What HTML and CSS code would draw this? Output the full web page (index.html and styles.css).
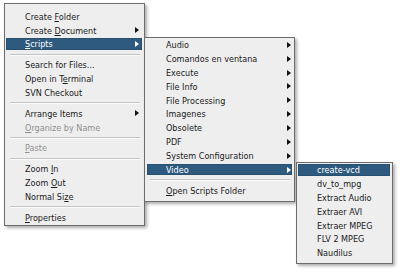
FILE: index.html
```html
<!DOCTYPE html>
<html>
<head>
<meta charset="utf-8">
<link rel="stylesheet" href="styles.css">
</head>
<body>
<div class="stage">
  <div class="menu m1">
    <div class="item"><span class="label">Create <u>F</u>older</span></div>
    <div class="item"><span class="label">Create <u>D</u>ocument</span><span class="arrow"></span></div>
    <div class="item active"><span class="label"><u>S</u>cripts</span><span class="arrow"></span></div>
    <div class="sep"></div>
    <div class="item"><span class="label">Search for Files...</span></div>
    <div class="item"><span class="label">Open in T<u>e</u>rminal</span></div>
    <div class="item"><span class="label">SVN Checkout</span></div>
    <div class="sep"></div>
    <div class="item"><span class="label">Arrange Items</span><span class="arrow"></span></div>
    <div class="item disabled"><span class="label"><u>O</u>rganize by Name</span></div>
    <div class="sep"></div>
    <div class="item disabled"><span class="label"><u>P</u>aste</span></div>
    <div class="sep"></div>
    <div class="item"><span class="label">Zoom <u>I</u>n</span></div>
    <div class="item"><span class="label">Zoom <u>O</u>ut</span></div>
    <div class="item"><span class="label">Normal Si<u>z</u>e</span></div>
    <div class="sep"></div>
    <div class="item"><span class="label"><u>P</u>roperties</span></div>
  </div>

  <div class="menu m2">
    <div class="item"><span class="label">Audio</span><span class="arrow"></span></div>
    <div class="item"><span class="label">Comandos en ventana</span><span class="arrow"></span></div>
    <div class="item"><span class="label">Execute</span><span class="arrow"></span></div>
    <div class="item"><span class="label">File Info</span><span class="arrow"></span></div>
    <div class="item"><span class="label">File Processing</span><span class="arrow"></span></div>
    <div class="item"><span class="label">Imagenes</span><span class="arrow"></span></div>
    <div class="item"><span class="label">Obsolete</span><span class="arrow"></span></div>
    <div class="item"><span class="label">PDF</span><span class="arrow"></span></div>
    <div class="item"><span class="label">System Configuration</span><span class="arrow"></span></div>
    <div class="item active"><span class="label">Video</span><span class="arrow"></span></div>
    <div class="sep"></div>
    <div class="item"><span class="label"><u>O</u>pen Scripts Folder</span></div>
  </div>

  <div class="menu m3">
    <div class="item active"><span class="label">create-vcd</span></div>
    <div class="item"><span class="label">dv_to_mpg</span></div>
    <div class="item"><span class="label">Extract Audio</span></div>
    <div class="item"><span class="label">Extraer AVI</span></div>
    <div class="item"><span class="label">Extraer MPEG</span></div>
    <div class="item"><span class="label">FLV 2 MPEG</span></div>
    <div class="item"><span class="label">Naudilus</span></div>
  </div>
</div>
</body>
</html>
```

FILE: styles.css
```css
html, body {
  margin: 0;
  padding: 0;
  background: #ffffff;
}

body {
  font-family: "DejaVu Sans", sans-serif;
  font-size: 8.1px;
  color: #1a1a1a;
}

.stage {
  position: relative;
  width: 400px;
  height: 277px;
  overflow: hidden;
}

.menu {
  box-sizing: border-box;
  background: #eeeeef;
  border: 1px solid #6c6c6c;
  box-shadow: 2px 2px 3px rgba(0, 0, 0, 0.32);
}

.m1 {
  margin: 3px 0 0 4px;
  width: 141px;
  height: 223px;
  padding-top: 5.5px;
}

.m2 {
  position: absolute;
  left: 144px;
  top: 37px;
  width: 151px;
  height: 165px;
  padding-top: 0;
}

.m3 {
  position: absolute;
  left: 296px;
  top: 162px;
  width: 97px;
  height: 102px;
  padding-top: 0;
}

.item {
  box-sizing: border-box;
  display: flex;
  align-items: center;
  height: 13.85px;
  margin: 0 2px 0 1px;
  padding: 0 3px 0 19px;
  border-top: 1px solid transparent;
  border-bottom: 1px solid transparent;
  background-clip: padding-box;
  white-space: nowrap;
}

.label {
  display: block;
  line-height: 11px;
  padding-top: 1.5px;
}

.m2 .item {
  margin-left: 2px;
  padding-right: 1px;
}

.m3 .item {
  margin-left: 1px;
  padding-left: 19px;
}

.item u {
  text-decoration: underline;
  text-underline-offset: 1px;
}

.item.active {
  background-color: #2f5a80;
  color: #ffffff;
  box-shadow: inset 0 0 0 1px #28506f;
}

.item.disabled {
  color: #8e8e8e;
}

.arrow {
  margin-left: auto;
  width: 0;
  height: 0;
  border-left: 4px solid #111;
  border-top: 3.5px solid transparent;
  border-bottom: 3.5px solid transparent;
}

.item.active .arrow {
  border-left-color: #ffffff;
}

.sep {
  height: 7px;
  margin: 0 4px 0 5px;
  display: flex;
  flex-direction: column;
  justify-content: center;
}

.sep::after {
  content: "";
  display: block;
  height: 1px;
  background: #c4c4c6;
  border-bottom: 1px solid #fbfbfb;
}
```
